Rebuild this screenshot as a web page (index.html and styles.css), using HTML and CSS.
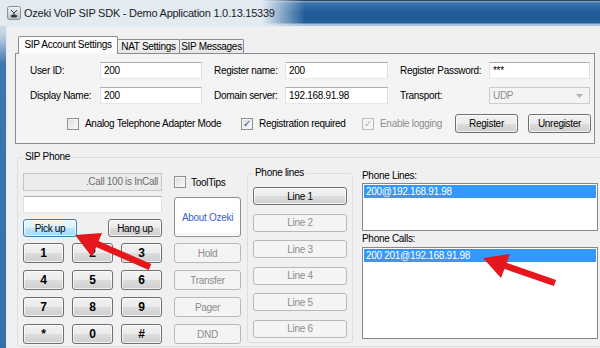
FILE: index.html
```html
<!DOCTYPE html>
<html lang="en">
<head>
  <meta charset="UTF-8">
  <meta name="viewport" content="width=device-width, initial-scale=1.0">
  <title>Ozeki VoIP SIP SDK - Demo Application</title>
  <link rel="stylesheet" href="styles.css">
</head>
<body>
  <div class="window">
    <div class="titlebar">
      <svg class="app-icon" width="14" height="14" viewBox="0 0 14 14">
        <defs>
          <linearGradient id="ig" x1="0" y1="0" x2="0" y2="1">
            <stop offset="0" stop-color="#f4f4f4"/>
            <stop offset="1" stop-color="#b9bcc0"/>
          </linearGradient>
        </defs>
        <rect x="0.5" y="0.5" width="13" height="13" rx="2" fill="url(#ig)" stroke="#8c9096"/>
        <path d="M4 4 L7 7 L10 4 M7 7 L7 9" stroke="#2d3a4c" stroke-width="1" fill="none"/>
        <ellipse cx="7" cy="10" rx="3.2" ry="1.6" fill="#2d3a4c"/>
      </svg>
      <span class="title">Ozeki VoIP SIP SDK - Demo Application 1.0.13.15339</span>
    </div>

    <div class="client">
      <div class="tabs">
        <div class="tab active">SIP Account Settings</div>
        <div class="tab nat">NAT Settings</div>
        <div class="tab msg">SIP Messages</div>
      </div>

      <div class="tab-panel">
        <div class="account-grid">
          <span class="field-label">User ID:</span>
          <div class="textbox">200</div>
          <span class="field-label pad">Register name:</span>
          <div class="textbox">200</div>
          <span class="field-label pad">Register Password:</span>
          <div class="textbox">***</div>

          <span class="field-label">Display Name:</span>
          <div class="textbox">200</div>
          <span class="field-label pad">Domain server:</span>
          <div class="textbox">192.168.91.98</div>
          <span class="field-label pad">Transport:</span>
          <div class="combo disabled">
            <span>UDP</span>
            <svg width="7" height="4" viewBox="0 0 7 4"><path d="M0 0 L7 0 L3.5 4 Z" fill="#b0b0b0"/></svg>
          </div>
        </div>

        <div class="options-row">
          <label class="check opt-analog"><span class="box"></span>Analog Telephone Adapter Mode</label>
          <label class="check opt-reg"><span class="box checked">&#10003;</span>Registration required</label>
          <label class="check opt-log disabled"><span class="box checked">&#10003;</span>Enable logging</label>
          <button class="btn reg">Register</button>
          <button class="btn unreg">Unregister</button>
        </div>
      </div>

      <fieldset class="group phone-group">
        <legend>SIP Phone</legend>
        <div class="phone-body">
          <div class="dial-col">
            <div class="status-box">.Call 100 is InCall</div>
            <div class="textbox dial-input"></div>
            <div class="call-buttons">
              <button class="btn focused">Pick up</button>
              <button class="btn">Hang up</button>
            </div>
            <div class="keypad">
              <button class="btn key">1</button>
              <button class="btn key">2</button>
              <button class="btn key">3</button>
              <button class="btn key">4</button>
              <button class="btn key">5</button>
              <button class="btn key">6</button>
              <button class="btn key">7</button>
              <button class="btn key">8</button>
              <button class="btn key">9</button>
              <button class="btn key">*</button>
              <button class="btn key">0</button>
              <button class="btn key">#</button>
            </div>
          </div>

          <div class="action-col">
            <label class="check tooltips"><span class="box"></span>ToolTips</label>
            <button class="btn about">About Ozeki</button>
            <div class="action-buttons">
              <button class="btn disabled">Hold</button>
              <button class="btn disabled">Transfer</button>
              <button class="btn disabled">Pager</button>
              <button class="btn disabled">DND</button>
            </div>
          </div>

          <fieldset class="group lines-group">
            <legend>Phone lines</legend>
            <div class="line-buttons">
              <button class="btn">Line 1</button>
              <button class="btn disabled">Line 2</button>
              <button class="btn disabled">Line 3</button>
              <button class="btn disabled">Line 4</button>
              <button class="btn disabled">Line 5</button>
              <button class="btn disabled">Line 6</button>
            </div>
          </fieldset>

          <div class="list-col">
            <div class="list-label">Phone Lines:</div>
            <div class="listbox lines-list">
              <div class="list-item selected">200@192.168.91.98</div>
            </div>
            <div class="list-label calls-label">Phone Calls:</div>
            <div class="listbox calls-list">
              <div class="list-item selected">200 201@192.168.91.98</div>
            </div>
          </div>
        </div>
      </fieldset>
    </div>

    <!-- annotation arrows drawn over the screenshot -->
    <svg class="arrows" width="600" height="348" viewBox="0 0 600 348">
      <line x1="95" y1="243" x2="150" y2="267" stroke="#e5161c" stroke-width="6.5"/>
      <polygon points="75,235 102,233 92,257" fill="#e5161c"/>
      <line x1="503" y1="265" x2="555" y2="283" stroke="#e5161c" stroke-width="6.5"/>
      <polygon points="483,258 510,254 501,278" fill="#e5161c"/>
    </svg>
  </div>
</body>
</html>
```

FILE: styles.css
```css
* {
  box-sizing: border-box;
}

body {
  margin: 0;
  width: 600px;
  height: 348px;
  overflow: hidden;
  font-family: "Liberation Sans", Arial, sans-serif;
  font-size: 10px;
  letter-spacing: -0.3px;
  color: #000;
}

.window {
  position: relative;
  height: 348px;
  background: linear-gradient(#dbe4ee 0, #c6d5e4 34px, #3f75ad 64px, #3a6ea6 100%);
}

.titlebar {
  height: 26px;
  display: flex;
  align-items: center;
  padding-left: 7px;
  background:
    linear-gradient(to right, #e2eaf2 0, #e2eaf2 262px, rgba(226, 234, 242, 0) 305px),
    linear-gradient(#2b3f57 0, #2b3f57 1px, #8fb1d2 1px, #3a73ad 3px, #1f5b97 13px, #225e99 23px, #a9c1da 24px, #a9c1da 26px);
}

.app-icon {
  display: block;
}

.title {
  margin-left: 3px;
  font-size: 11px;
  letter-spacing: -0.25px;
  color: #1b1b1b;
}

.client {
  margin-left: 6px;
  height: 322px;
  padding-top: 9px;
  background: #f0f0f0;
  border-top: 1px solid #e3eaf1;
  border-left: 1px solid #e3eaf1;
}

/* tabs */
.tabs {
  display: flex;
  align-items: flex-end;
  height: 17px;
  margin-left: 11px;
}

.tab {
  height: 14px;
  line-height: 13px;
  text-align: center;
  border: 1px solid #898c95;
  border-bottom: none;
  border-radius: 2px 2px 0 0;
  background: linear-gradient(#f3f3f3, #e6e6e6);
}

.tab.active {
  position: relative;
  z-index: 1;
  width: 100px;
  height: 18px;
  margin-bottom: -1px;
  line-height: 15px;
  background: #fbfbfb;
}

.tab.nat {
  width: 63px;
  margin-left: -1px;
}

.tab.msg {
  width: 65px;
  margin-left: -1px;
}

.tab-panel {
  width: 580px;
  height: 91px;
  margin-left: 8px;
  padding: 8px 0 0 14px;
  border: 1px solid #898c95;
  background: #f4f4f4;
}

.account-grid {
  display: grid;
  grid-template-columns: 70px 102px 83px 103px 101px 101px;
  grid-auto-rows: 17px;
  row-gap: 8px;
  align-items: center;
}

.field-label.pad {
  padding-left: 12px;
}

.textbox {
  height: 17px;
  line-height: 15px;
  padding: 0 3px;
  background: #fff;
  border: 1px solid;
  border-color: #abadb3 #dbdfe6 #e3e9ef #e2e3ea;
}

.combo {
  height: 17px;
  display: flex;
  align-items: center;
  justify-content: space-between;
  padding: 0 6px 0 3px;
  background: #f4f4f4;
  border: 1px solid #c9cbcf;
  color: #a0a0a0;
}

.options-row {
  display: flex;
  align-items: center;
  margin-top: 10px;
  padding-left: 37px;
  height: 19px;
}

.check {
  display: flex;
  align-items: center;
}

.check .box {
  width: 12px;
  height: 12px;
  margin-right: 6px;
  border: 1px solid #8e8f8f;
  background: linear-gradient(135deg, #dcdcdc, #fbfbfb);
  box-shadow: inset 0 0 0 1px #f5f5f5;
  font-size: 10px;
  line-height: 10px;
  text-align: center;
  color: #3c4f8c;
  letter-spacing: 0;
}

.opt-analog {
  width: 174px;
}

.opt-reg {
  width: 121px;
}

.opt-log {
  width: 93px;
}

.disabled {
  color: #8d8d8d;
}

.check.disabled .box {
  border-color: #b8b8b8;
  background: #f4f4f4;
  color: #b5b5b5;
}

/* buttons */
.btn {
  font: inherit;
  letter-spacing: inherit;
  color: #000;
  padding: 0;
  border: 1px solid #707070;
  border-radius: 3px;
  background: linear-gradient(#f2f2f2 0%, #ebebeb 50%, #dddddd 50%, #cfcfcf 100%);
  box-shadow: inset 0 0 0 1px rgba(255, 255, 255, 0.7);
}

.btn.disabled {
  color: #8d8d8d;
  border-color: #b6b9bc;
  background: #f4f4f4;
  box-shadow: none;
}

.btn.focused {
  border-color: #3c7fb1;
  background: linear-gradient(#eaf6fd 0%, #d9f0fc 50%, #bee6fd 50%, #a7d9f5 100%);
}

.reg,
.unreg {
  width: 63px;
  height: 19px;
}

.unreg {
  margin-left: 10px;
}

/* SIP phone area */
.group {
  margin: 0;
  border: 1px solid #d5dfe5;
  border-radius: 3px;
}

.group legend {
  padding: 0 2px;
  line-height: 12px;
}

.phone-group {
  width: 600px;
  height: 196px;
  margin: 7px 0 0 10px;
  padding: 4px 0 0 5px;
}

.phone-body {
  display: flex;
  align-items: flex-start;
}

.dial-col {
  width: 139px;
  margin-top: 6px;
}

.status-box {
  height: 18px;
  line-height: 16px;
  padding: 0 3px;
  text-align: right;
  color: #6d6d6d;
  background: #ececec;
  border: 1px solid #c3c5c9;
}

.dial-input {
  margin-top: 5px;
}

.call-buttons {
  display: flex;
  justify-content: space-between;
  margin-top: 6px;
}

.call-buttons .btn {
  width: 54px;
  height: 18px;
}

.keypad {
  display: grid;
  grid-template-columns: repeat(3, 41px);
  grid-auto-rows: 20px;
  justify-content: space-between;
  row-gap: 7px;
  margin-top: 6px;
}

.key {
  font-size: 12px;
  font-weight: bold;
  letter-spacing: 0;
}

.action-col {
  width: 67px;
  margin-left: 12px;
  margin-top: 8px;
}

.tooltips {
  height: 14px;
}

.tooltips .box {
  margin-right: 5px;
}

.about {
  display: block;
  width: 67px;
  height: 40px;
  margin-top: 8px;
  color: #3a5fcd;
  border-color: #8e8f8f;
  background: #fff;
  box-shadow: inset 0 0 0 1px #fff, inset 0 -2px 3px #eaeaea;
}

.action-buttons {
  display: flex;
  flex-direction: column;
  gap: 7px;
  margin-top: 6px;
}

.action-buttons .btn {
  height: 20px;
}

.lines-group {
  width: 106px;
  height: 176px;
  margin-left: 6px;
  padding: 8px 5px 0 5px;
}

.line-buttons {
  display: flex;
  flex-direction: column;
  gap: 8.6px;
}

.line-buttons .btn {
  height: 18px;
}

.list-col {
  width: 236px;
  margin-left: 9px;
  margin-top: 3px;
}

.list-label {
  line-height: 12px;
}

.calls-label {
  margin-top: 2px;
}

.listbox {
  margin-top: 1px;
  padding: 1px;
  background: #fff;
  border: 1px solid #828790;
}

.lines-list {
  height: 48px;
}

.calls-list {
  height: 92px;
  margin-top: 2px;
}

.list-item {
  height: 13px;
  line-height: 13px;
  padding-left: 2px;
}

.list-item.selected {
  background: #3399ff;
  color: #fff;
}

.arrows {
  position: absolute;
  left: 0;
  top: 0;
  pointer-events: none;
}
```
